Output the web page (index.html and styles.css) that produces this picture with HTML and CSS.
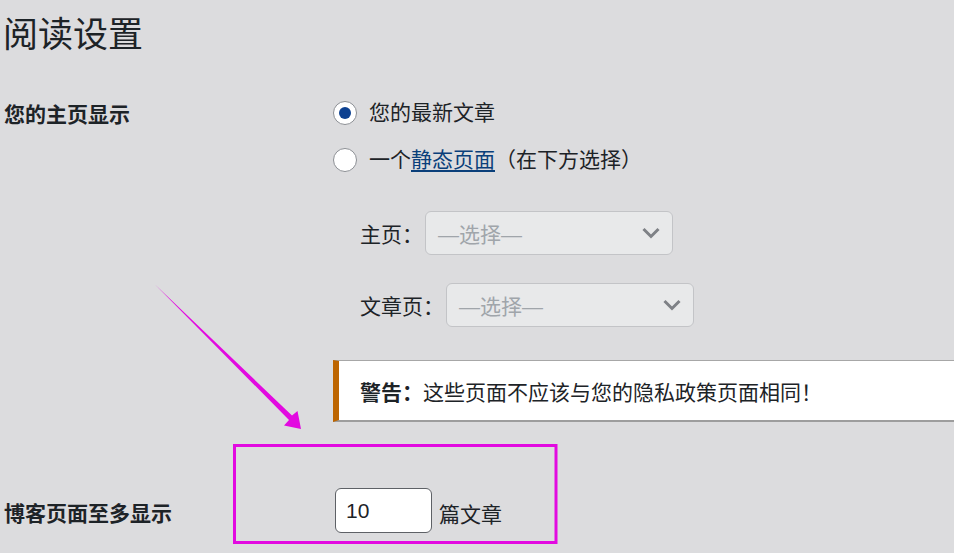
FILE: index.html
```html
<!DOCTYPE html>
<html lang="zh-CN">
<head>
<meta charset="utf-8">
<title>阅读设置</title>
<link rel="stylesheet" href="styles.css">
</head>
<body>
<div class="wrap">
  <h1 class="title">阅读设置</h1>
  <div class="form-row first">
    <div class="label">您的主页显示</div>
    <div class="field">
      <label class="radio-line"><input type="radio" name="front" class="radio" checked><span>您的最新文章</span></label>
      <label class="radio-line second"><input type="radio" name="front" class="radio"><span>一个<a href="#" class="link">静态页面</a>（在下方选择）</span></label>
      <div class="select-row r1">
        <span class="sel-label">主页：</span>
        <div class="select"><span class="sel-text">—选择—</span><svg class="chev" width="20" height="12" viewBox="0 0 20 12"><path d="M2.5 2 L10 9.5 L17.5 2" fill="none" stroke="#7e8186" stroke-width="3"/></svg></div>
      </div>
      <div class="select-row r2">
        <span class="sel-label">文章页：</span>
        <div class="select"><span class="sel-text">—选择—</span><svg class="chev" width="20" height="12" viewBox="0 0 20 12"><path d="M2.5 2 L10 9.5 L17.5 2" fill="none" stroke="#7e8186" stroke-width="3"/></svg></div>
      </div>
      <div class="notice"><strong>警告：</strong>这些页面不应该与您的隐私政策页面相同！</div>
    </div>
  </div>
  <div class="form-row second-row">
    <div class="label">博客页面至多显示</div>
    <div class="field inline">
      <input class="num" type="text" value="10">
      <span class="unit">篇文章</span>
    </div>
  </div>
</div>
<svg class="annot" width="954" height="553" viewBox="0 0 954 553">
  <rect x="234.5" y="445.5" width="321.5" height="97" fill="none" stroke="#e20ae0" stroke-width="3"/>
  <polygon points="155,284.5 292,415.5 297.5,411 301,429 284,425.5 289,420" fill="#e20ae0"/>
</svg>
</body>
</html>
```

FILE: styles.css
```css
html, body {
  margin: 0;
  padding: 0;
  background: #dcdcde;
}
body {
  font-family: "Liberation Sans", "Noto Sans CJK SC", sans-serif;
  color: #1d2327;
  font-size: 21px;
  width: 954px;
  height: 553px;
  overflow: hidden;
  position: relative;
}
.wrap {
  padding-left: 4px;
}
.title {
  margin: 13px 0 0 -1px;
  font-size: 35px;
  line-height: 44px;
  font-weight: 400;
  color: #1d2327;
}
.form-row {
  display: flex;
}
.form-row.first {
  margin-top: 41px;
}
.label {
  width: 329px;
  flex: none;
  font-weight: 700;
  line-height: 30px;
  padding-top: 2px;
}
.field {
  flex: 1;
  display: flex;
  flex-direction: column;
  align-items: flex-start;
  min-width: 0;
}
.radio-line {
  display: flex;
  align-items: center;
  height: 30px;
  line-height: 30px;
}
.radio-line.second {
  margin-top: 17px;
}
.radio {
  appearance: none;
  -webkit-appearance: none;
  width: 24px;
  height: 24px;
  margin: 0 12px 0 0;
  border: 1.5px solid #8c8f94;
  border-radius: 50%;
  background: #fff;
  box-sizing: border-box;
  display: flex;
  align-items: center;
  justify-content: center;
}
.radio:checked::before {
  content: "";
  width: 12px;
  height: 12px;
  border-radius: 50%;
  background: #0d4191;
}
.link {
  color: #0a3f7a;
  text-decoration: underline;
  text-underline-offset: 3px;
}
.select-row {
  display: flex;
  align-items: center;
  padding-left: 27px;
}
.select-row.r1 { margin-top: 36px; }
.select-row.r2 { margin-top: 28px; }
.sel-label {
  margin-right: 2px;
}
.select {
  width: 248px;
  height: 44px;
  box-sizing: border-box;
  border: 1px solid #c3c4c7;
  border-radius: 6px;
  background: #e8e9ea;
  display: flex;
  align-items: center;
  justify-content: space-between;
  padding: 0 11px 0 12px;
}
.sel-text {
  color: #a0a5aa;
}
.chev {
  display: block;
}
.notice {
  margin-top: 33px;
  align-self: stretch;
  height: 62px;
  box-sizing: border-box;
  background: #fff;
  border-left: 6px solid #bd6500;
  border-top: 1px solid #a7a7a7;
  border-bottom: 2px solid #9d9d9d;
  display: flex;
  align-items: center;
  padding-left: 21px;
  margin-right: -20px;
}
.notice strong {
  font-weight: 700;
}
.form-row.second-row {
  margin-top: 66px;
  align-items: center;
}
.second-row .label {
  padding-top: 6px;
}
.field.inline {
  flex-direction: row;
  align-items: center;
}
.num {
  width: 97px;
  height: 45px;
  box-sizing: border-box;
  margin: 0 7px 0 2px;
  border: 1px solid #5e6166;
  border-radius: 6px;
  background: #fff;
  font-family: "Liberation Sans", sans-serif;
  font-size: 21px;
  color: #1d2327;
  padding: 0 10px;
}
.unit {
  padding-top: 4px;
}
.annot {
  position: absolute;
  left: 0;
  top: 0;
  pointer-events: none;
}
```
